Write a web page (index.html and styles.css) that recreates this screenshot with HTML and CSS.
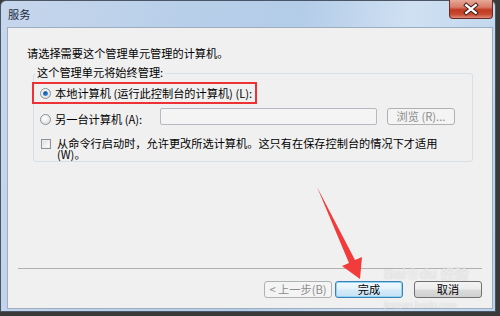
FILE: index.html
```html
<!DOCTYPE html>
<html>
  <head>
    <meta charset="UTF-8">
    <title>服务</title>
    <link rel="stylesheet" href="styles.css">
  </head>
  <body>
    <div class="window">
      <div class="titlebar">
        <span class="title">服务</span>
        <span class="close">
          <svg width="44" height="19" viewBox="0 0 44 19">
            <path d="M17 5 L27 13 M27 5 L17 13" stroke="#3a1a14" stroke-width="4.4" stroke-linecap="square"/>
            <path d="M17 5 L27 13 M27 5 L17 13" stroke="#ffffff" stroke-width="2.4" stroke-linecap="square"/>
          </svg>
        </span>
      </div>

      <div class="client">
        <p class="intro">请选择需要这个管理单元管理的计算机。</p>

        <div class="group">
          <div class="group-title">这个管理单元将始终管理:</div>

          <div class="option option-marked">
            <span class="radio checked"></span>
            <span class="option-label">本地计算机 (运行此控制台的计算机) (L):</span>
          </div>

          <div class="option option-other">
            <span class="radio"></span>
            <span class="option-label other-label">另一台计算机 (A):</span>
            <span class="textbox"></span>
            <span class="btn btn-disabled btn-browse">浏览 (R)...</span>
          </div>

          <div class="check-row">
            <span class="checkbox"></span>
            <span class="check-label">从命令行启动时，允许更改所选计算机。这只有在保存控制台的情况下才适用 (W)。</span>
          </div>
        </div>

        <div class="footer">
          <div class="separator"></div>
          <div class="buttons">
            <span class="btn btn-disabled">&lt; 上一步(B)</span>
            <span class="btn btn-default">完成</span>
            <span class="btn btn-cancel">取消</span>
          </div>
        </div>
      </div>
    </div>

    <!-- red pointer drawn over the dialog -->
    <svg class="arrow" width="500" height="316" viewBox="0 0 500 316">
      <polygon points="317,187 355,260 362,257 360,279 342,266 349,263" fill="#f23b3b"/>
    </svg>

    <div class="watermark">
      <div class="wm-logo">Bai<span class="wm-paw">&#x2740;</span>du 经验</div>
      <div class="wm-url">jingyan.baidu.com</div>
    </div>
  </body>
</html>
```

FILE: styles.css
```css
body {
margin: 0;
width: 500px;
height: 316px;
position: relative;
overflow: hidden;
background-color: #3a3a3a;
font-family: "Noto Sans CJK SC", "Liberation Sans", sans-serif;
font-size: 11.2px;
color: #000;
}
.window {
box-sizing: border-box;
width: 496px;
height: 312px;
border: 1px solid #4a5666;
border-radius: 6px 6px 0 0;
padding-bottom: 2px;
display: flex;
flex-direction: column;
background: linear-gradient(100deg, #c6d6ec 0%, #b8cfe9 35%, #b3cce8 55%, #cfe0f2 75%, #bcd3ec 100%);
}
.titlebar {
height: 26px;
display: flex;
justify-content: space-between;
align-items: flex-start;
}
.title {
padding-left: 7px;
line-height: 26px;
color: #1b2a3e;
}
.close {
width: 44px;
height: 19px;
margin-top: -1px;
margin-right: 2px;
box-sizing: border-box;
border: 1px solid #6a2b22;
border-top: none;
border-radius: 0 0 4px 4px;
background: linear-gradient(180deg, #e8a898 0%, #d77a66 40%, #c1381f 55%, #c74a32 80%, #e0897a 100%);
display: flex;
}
.client {
box-sizing: border-box;
height: 282px;
margin: 0 2px 0 6px;
border: 1px solid #9eadbf;
background-color: #f0f0f0;
display: flex;
flex-direction: column;
}
.intro {
margin: 18px 0 0 19px;
line-height: 14px;
}
.group {
box-sizing: border-box;
width: 440px;
margin: 13px 0 0 25px;
padding-bottom: 1px;
border: 1px solid #d5dfe5;
border-radius: 3px;
}
.group-title {
width: fit-content;
margin: -9px 0 0 1px;
padding: 0 2px;
line-height: 14px;
background-color: #f0f0f0;
}
.option {
display: flex;
align-items: center;
padding-left: 6px;
}
.option-marked {
width: fit-content;
height: 22px;
box-sizing: border-box;
margin: 3px 0 0 -2px;
padding: 0 3px 0 6px;
border: 2px solid #ee3134;
}
.option-label {
margin-left: 4px;
line-height: 18px;
white-space: nowrap;
}
.option-other {
height: 17px;
margin-top: 4px;
align-items: flex-start;
}
.option-other .radio {
margin-top: 6px;
}
.other-label {
width: 105px;
padding-top: 2px;
line-height: 18px;
}
.radio {
box-sizing: border-box;
width: 11px;
height: 11px;
flex: none;
border: 1px solid #8f9194;
border-radius: 50%;
background: radial-gradient(circle at 40% 35%, #ffffff 0%, #e8e8e8 60%, #d2d2d2 100%);
display: flex;
align-items: center;
justify-content: center;
}
.radio.checked::after {
content: "";
width: 5px;
height: 5px;
border-radius: 50%;
background: radial-gradient(circle at 40% 40%, #1c4f8c 0%, #2d7fcf 55%, #8fcaf5 100%);
}
.textbox {
box-sizing: border-box;
width: 217px;
height: 17px;
border: 1px solid #b5b9c0;
border-radius: 2px;
background-color: #f4f4f4;
}
.btn-browse {
margin-left: 10px;
width: 72px;
}
.check-row {
display: flex;
align-items: flex-start;
margin-top: 13px;
padding-left: 7px;
}
.checkbox {
box-sizing: border-box;
width: 10px;
height: 10px;
flex: none;
margin-top: 1px;
border: 1px solid #8f9194;
background: linear-gradient(135deg, #d8d8d8 0%, #f4f4f4 60%, #ffffff 100%);
box-shadow: inset 0 0 0 1px #eeeeee;
}
.check-label {
width: 392px;
margin-left: 6px;
line-height: 11px;
}
.footer {
margin-top: auto;
padding-bottom: 10px;
}
.separator {
margin: 0 10px;
border-top: 1px solid #b0b0b0;
}
.buttons {
display: flex;
justify-content: flex-end;
gap: 3px;
margin-top: 12px;
padding-right: 10px;
}
.btn {
box-sizing: border-box;
width: 68px;
height: 17px;
line-height: 15px;
text-align: center;
border: 1px solid #707070;
border-radius: 3px;
background: linear-gradient(180deg, #f4f4f4 0%, #ececec 48%, #dcdcdc 52%, #d0d0d0 100%);
white-space: nowrap;
}
.btn-disabled {
border-color: #adb2b5;
background: #f4f4f4;
color: #8c8c8c;
}
.btn-default {
border-color: #3c7fb1;
background: linear-gradient(180deg, #f0f8fd 0%, #e4f2fb 48%, #d4eaf8 52%, #c6e2f4 100%);
box-shadow: inset 0 0 0 1px #8fd5f7;
}
.btn-cancel {
margin-left: 8px;
}
.arrow {
position: absolute;
left: 0;
top: 0;
pointer-events: none;
}
.watermark {
position: absolute;
left: 384px;
top: 267px;
color: rgba(255, 255, 255, 0.6);
text-shadow: 0 0 1px rgba(120, 120, 120, 0.35);
font-family: "Liberation Sans", "Noto Sans CJK SC", sans-serif;
pointer-events: none;
}
.wm-logo {
font-size: 14px;
font-weight: bold;
line-height: 14px;
}
.wm-paw {
font-size: 12px;
margin: 0 1px;
}
.wm-url {
font-size: 9px;
line-height: 10px;
margin-top: 18px;
}
```
